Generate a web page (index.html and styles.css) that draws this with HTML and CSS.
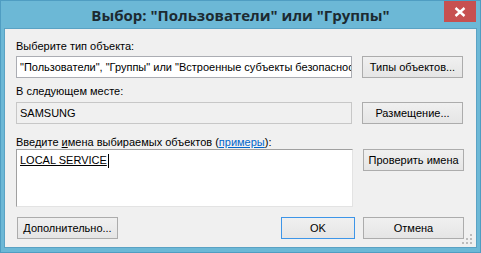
FILE: index.html
```html
<!DOCTYPE html>
<html lang="ru">
<head>
<meta charset="utf-8">
<title>Выбор</title>
<link rel="stylesheet" href="styles.css">
</head>
<body>
<div class="window">
  <div class="titlebar">
    <div></div>
    <div class="title">Выбор: "Пользователи" или "Группы"</div>
    <div class="close-cell">
      <div class="close">
        <svg width="12" height="10" viewBox="0 0 12 10"><path d="M1.5 1 L10.5 9 M10.5 1 L1.5 9" stroke="#fff" stroke-width="2.4" fill="none"/></svg>
      </div>
    </div>
  </div>
  <div class="client">
    <div class="label l1">Выберите тип объекта:</div>
    <div class="row">
      <div class="field f-white">"Пользователи", "Группы" или "Встроенные субъекты безопасности"</div>
      <div class="btn">Типы объектов...</div>
    </div>
    <div class="label l2">В следующем месте:</div>
    <div class="row">
      <div class="field f-gray">SAMSUNG</div>
      <div class="btn">Размещение...</div>
    </div>
    <div class="label l3">Введите <u>и</u>мена выбираемых объектов (<a class="link" href="#">примеры</a>):</div>
    <div class="row">
      <div class="textarea"><span class="entry">LOCAL SERVICE</span><span class="caret"></span></div>
      <div class="btn">Проверить имена</div>
    </div>
    <div class="bottom">
      <div class="btn">Дополнительно...</div>
      <div class="spacer"></div>
      <div class="btn btn-ok">OK</div>
      <div class="btn">Отмена</div>
    </div>
    <div class="grip">
      <svg width="12" height="12" viewBox="0 0 12 12" fill="#bcbcbc">
        <rect x="8" y="0" width="2" height="2"/>
        <rect x="4" y="4" width="2" height="2"/><rect x="8" y="4" width="2" height="2"/>
        <rect x="0" y="8" width="2" height="2"/><rect x="4" y="8" width="2" height="2"/><rect x="8" y="8" width="2" height="2"/>
      </svg>
    </div>
  </div>
</div>
</body>
</html>
```

FILE: styles.css
```css
html, body {
  margin: 0;
  padding: 0;
  background: #6cb8d6;
}
.window {
  width: 481px;
  height: 253px;
  box-sizing: border-box;
  border: 1px solid #4f9dc2;
  background: #6cb8d6;
  display: flex;
  flex-direction: column;
  font-family: "Liberation Sans", Arial, sans-serif;
  font-size: 11px;
  color: #000;
}
.titlebar {
  height: 27px;
  display: grid;
  grid-template-columns: 1fr auto 1fr;
  align-items: start;
}
.title {
  font-family: "Open Sans", "Liberation Sans", sans-serif;
  font-weight: bold;
  font-size: 15px;
  line-height: 15px;
  padding-top: 7px;
  color: #1c2a31;
  white-space: nowrap;
}
.close-cell {
  display: flex;
  justify-content: flex-end;
  padding-right: 4px;
}
.close {
  width: 32px;
  height: 21px;
  background: #c75050;
  display: flex;
  align-items: center;
  justify-content: center;
}
.client {
  position: relative;
  margin: 0 3px 4px 3px;
  flex: 1;
  border: 1px solid #5aa2c4;
  background: #f0f0f0;
  padding: 10px 12px 0 11px;
}
.label {
  height: 14px;
  line-height: 14px;
  white-space: nowrap;
}
.l1 { margin-bottom: 3px; }
.l2 { margin-top: 6px; margin-bottom: 4px; }
.l3 { margin-top: 11px; }
.row {
  display: flex;
  gap: 10px;
  align-items: flex-start;
}
.field {
  width: 336px;
  height: 22px;
  box-sizing: border-box;
  border: 1px solid #abadb3;
  line-height: 20px;
  padding-left: 3px;
  white-space: nowrap;
  overflow: hidden;
}
.f-white { background: #fff; }
.f-gray { background: #f0f0f0; border-color: #c7c7c7; }
.btn {
  width: 101px;
  height: 22px;
  box-sizing: border-box;
  border: 1px solid #acacac;
  background: linear-gradient(#f0f0f0, #e5e5e5);
  display: flex;
  align-items: center;
  justify-content: center;
  white-space: nowrap;
}
.textarea {
  width: 338px;
  height: 58px;
  box-sizing: border-box;
  border: 1px solid #a0a0a0;
  border-right-color: #e3e3e3;
  border-bottom-color: #e3e3e3;
  background: #fff;
  padding: 4px 0 0 3px;
  line-height: 13px;
  display: flex;
  align-items: flex-start;
}
.entry { text-decoration: underline; }
.caret {
  width: 1px;
  height: 14px;
  background: #000;
  margin-left: 1px;
}
.link { color: #0066cc; text-decoration: underline; }
.bottom {
  display: flex;
  gap: 8px;
  margin-top: 10px;
  padding-left: 1px;
}
.spacer { flex: 1; }
.btn-ok {
  width: 74px;
  border-color: #3d95e8;
}
.grip {
  position: absolute;
  right: 2px;
  bottom: 1px;
  line-height: 0;
}
```
